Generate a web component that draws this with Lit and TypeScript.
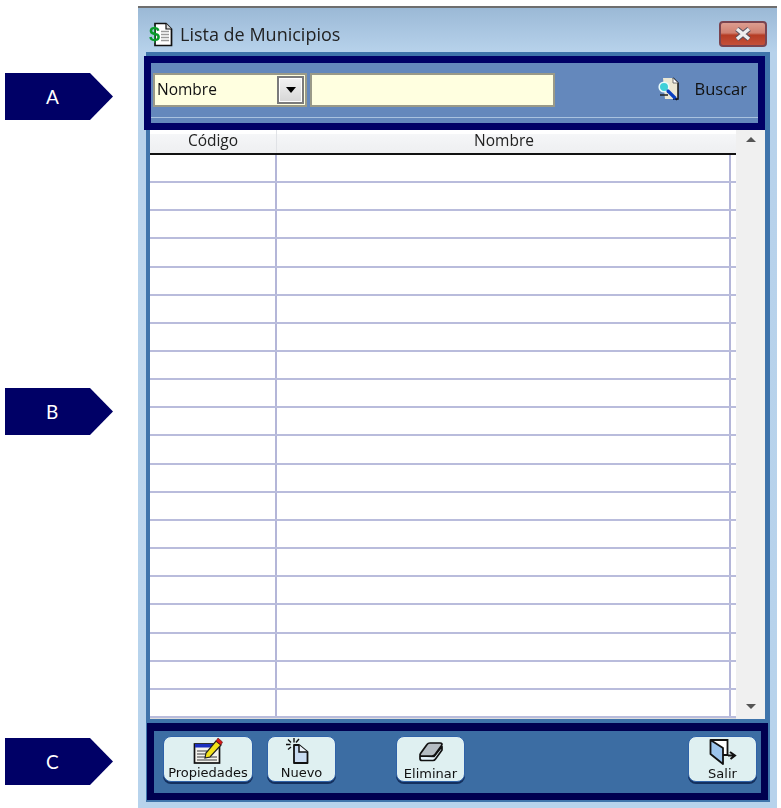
import { LitElement, html, css, svg } from "lit";
import { customElement } from "lit/decorators.js";

const docIcon = svg`<svg width="26" height="26" viewBox="0 0 26 26">
<path d="M6 2.500H17L22.500 8V24.500H6Z" fill="#fff" stroke="#111" stroke-width="1.700"/>
<path d="M17 2.500V8H22.500" fill="#ddd" stroke="#111" stroke-width="1.200"/>
<path d="M12 10.500H20M12 13.500H20M12 16.500H20M12 19.500H20" stroke="#9a9a9a" stroke-width="1.300"/>
<text x="0" y="20" font-family="Liberation Sans" font-weight="700" font-size="20" fill="#0a9a2a">$</text></svg>`;

const searchIcon = svg`<svg width="24" height="26" viewBox="0 0 24 26">
<path d="M6 2H16L21 7V23H8Z" fill="#ece8d4"/>
<path d="M16 2L21 7V23H16" fill="none" stroke="#111" stroke-width="1.500"/>
<path d="M16 2V7H21" fill="#fff" stroke="#555" stroke-width=".8"/>
<path d="M3 19H11" stroke="#222" stroke-width="1.500"/>
<circle cx="7" cy="11" r="4.800" fill="#3fd0d8" stroke="#e8fafa" stroke-width="1.600"/>
<path d="M11 15L18 22" stroke="#0a3fc0" stroke-width="3.200" stroke-linecap="round"/>
<path d="M18.500 22.500L20 24" stroke="#111" stroke-width="1.500"/></svg>`;

const propsIcon = svg`<svg width="32" height="28" viewBox="0 0 32 28">
<rect x="2.500" y="7" width="25" height="19" fill="#f4f4ee" stroke="#111" stroke-width="1.700"/>
<rect x="3" y="7" width="24" height="3.500" fill="#1a2fc0"/>
<path d="M5 14H15M5 17H14M5 20H25M5 23H25" stroke="#777" stroke-width="1.300"/>
<path d="M14 16L24 4L29 8L18 20L13 21Z" fill="#f2e21a" stroke="#222" stroke-width="1.200"/>
<path d="M24 4L26 1L30.500 5L29 8Z" fill="#d81818" stroke="#511" stroke-width=".6"/></svg>`;

const newIcon = svg`<svg width="34" height="28" viewBox="0 0 34 28">
<path d="M9 8H14L22.500 15V26H9Z" fill="#c9dcf2" stroke="#111" stroke-width="1.800" stroke-linejoin="round"/>
<path d="M14 8V15H22.500" fill="#eef4fb" stroke="#111" stroke-width="1.500"/>
<path d="M9 1V5.500M1 7.500H5.500M3 2.500L6 5.500M14 2L11 5.500M3 12.500L6 10" stroke="#111" stroke-width="1.400" fill="none"/></svg>`;

const eraseIcon = svg`<svg width="26" height="22" viewBox="0 0 26 22">
<path d="M2 15V17.500Q2 19.500 4 19.500H15Q16.500 19.500 17.500 18L24 9V5.500L16 15.500Z" fill="#e4f2fa" stroke="#111" stroke-width="1.700" stroke-linejoin="round"/>
<path d="M9 3.500Q10 2 12 2H22Q25 2 23.500 4.500L17 13.500Q16 15 14 15H4Q1 15 2.500 12.500Z" fill="#b4bcc2" stroke="#111" stroke-width="1.700"/></svg>`;

const exitIcon = svg`<svg width="30" height="28" viewBox="0 0 30 28">
<path d="M2.500 3H19.500V18H15" fill="#fff" stroke="#111" stroke-width="1.800"/>
<path d="M2.500 3L15 11V27L2.500 17Z" fill="#9cc4ec" stroke="#111" stroke-width="1.800" stroke-linejoin="round"/>
<path d="M22 15L27 18.500L22.500 22M27 18.500H20" stroke="#111" stroke-width="2" fill="none"/></svg>`;

@customElement("app-root")
export class AppRoot extends LitElement {
  static styles = css`
    :host { display: block; width: 781px; height: 808px; background: #fff; font-family: "Open Sans", sans-serif; overflow: hidden; }
    .page { display: flex; height: 808px; }
    .notes { width: 138px; flex: none; display: flex; flex-direction: column; padding-top: 73px; box-sizing: border-box; }
    .note { width: 108px; height: 47px; margin-left: 5px; background: #000066; color: #fff; display: flex; align-items: center; box-sizing: border-box; padding-left: 41px;
      clip-path: polygon(0 0, 85px 0, 108px 50%, 85px 100%, 0 100%); font: 19px Lato, sans-serif; }
    .note.b { margin-top: 268px; }
    .note.c { margin-top: 303px; }

    .window { width: 639px; height: 802px; margin-top: 6px; border-top: 2px solid #6e6e6e; box-sizing: border-box; background: linear-gradient(#9bb9d6 0, #b7d2eb 44px, #b7d3ec 100%); filter: blur(.35px); }
    .title { height: 44px; display: flex; align-items: center; padding: 8px 10px 0 11px; gap: 5px; box-sizing: border-box; font-size: 18px; color: #222; }
    .title-text { flex: 1; }
    .close { width: 48px; height: 26px; box-sizing: border-box; border: 2px solid #7a4450; border-radius: 4px; background: linear-gradient(#dd9d90, #d08070 45%, #b53c24 55%, #c4503a); display: flex; align-items: center; justify-content: center; }

    .panel { height: 750px; margin: 0 7px 0 8px; padding-top: 4px; box-sizing: border-box; background: #3f74ab; display: flex; flex-direction: column; }

    .search { height: 74px; margin: 0 5px 0 -2px; border: 7px solid #000066; box-sizing: border-box; background: #6488bc; }
    .search-row { height: 55px; border-bottom: 1px solid #a9c2df; padding: 10px 11px 0 2px; box-sizing: border-box; display: flex; align-items: flex-start; gap: 3px; font-size: 15.500px; color: #111; }
    .combo { width: 154px; height: 34px; box-sizing: border-box; border: 2px solid #9a9a88; background: #ffffe0; display: flex; align-items: center; justify-content: space-between; padding: 0 1px 0 2px; }
    .combo span { margin-top: -2px; }
    .arrow-btn { width: 27px; height: 28px; box-sizing: border-box; border: 2px solid #7b7b7b; outline: 1px solid #fff; outline-offset: -3px; background: linear-gradient(#f2f2f2, #d6d6d6); display: flex; align-items: center; justify-content: center; }
    .tri { width: 0; height: 0; border: 5px solid transparent; border-top: 6px solid #000; border-bottom: 0; }
    .field { width: 245px; height: 34px; box-sizing: border-box; border: 2px solid #9a9a88; background: #ffffe0; }
    .find { margin-left: auto; height: 34px; display: flex; align-items: center; gap: 14px; font-size: 16.500px; }
    .find svg { margin-top: -3px; margin-left: -2px; }
    .find span { margin-top: -3px; }

    .table { height: 589px; margin: 0 5px 0 4px; background: #fff; display: flex; }
    .grid { flex: 1; display: flex; flex-direction: column; }
    .head { height: 25px; flex: none; border-bottom: 2px solid #111; box-sizing: border-box; background: linear-gradient(#fff 4px, #f5f6f8 4px, #eeeff1); display: grid; grid-template-columns: 127px 1fr 5px; font-size: 15.500px; color: #222; text-align: center; line-height: 20px; }
    .head div:first-child { border-right: 1px solid #e0e2e6; }
    .rows { height: 564px; box-sizing: border-box; display: grid; grid-template-rows: repeat(20, 1fr); border-bottom: 1px solid #ddd; }
    .row { display: grid; grid-template-columns: 127px 1fr 5px; border-bottom: 2px solid #b9bcdc; box-sizing: border-box; }
    .row div { border-right: 2px solid #b4b6d8; }
    .row div:last-child { border-right: 0; }
    .scroll { width: 29px; background: #f0f0f0; display: flex; flex-direction: column; justify-content: space-between; align-items: center; padding: 7px 0 10px; box-sizing: border-box; }
    .up, .down { width: 0; height: 0; border: 5px solid transparent; }
    .up { border-bottom: 5px solid #555; border-top: 0; }
    .down { border-top: 5px solid #555; border-bottom: 0; }

    .actions { height: 77px; margin: 4px 2px 0 1px; border: 7px solid #000050; border-top-width: 8px; box-sizing: border-box; background: #3c6da3; padding: 5px 4px 0 9px; display: flex; align-items: flex-start; }
    .btn { width: 69px; height: 46px; box-sizing: border-box; border: 1px solid #2f62a8; border-radius: 8px; background: #dff0f1; box-shadow: 0 2px 0 #14305e; display: flex; flex-direction: column; align-items: center; font: 13px "DejaVu Sans", sans-serif; color: #111; }
    .btn svg { flex: none; }
    .btn span { line-height: 15px; }
    .wide { width: 90px; margin-right: 14px; }
    .erase { margin-left: 60px; padding-top: 4px; }
    .erase svg { margin-bottom: 3px; }
    .exit { margin-left: auto; }
    .exit span { margin-top: 1px; }
  `;

  render() {
    const rows = Array.from({ length: 20 });
    return html`<div class="page">
      <div class="notes">
        <div class="note">A</div>
        <div class="note b">B</div>
        <div class="note c">C</div>
      </div>
      <div class="window">
        <div class="title">
          ${docIcon}
          <span class="title-text">Lista de Municipios</span>
          <div class="close"><svg width="22" height="16" viewBox="0 0 22 16"><path d="M5 3L17 13M17 3L5 13" stroke="#55505e" stroke-width="5.500"/><path d="M5 3L17 13M17 3L5 13" stroke="#eeeeee" stroke-width="3.500"/></svg></div>
        </div>
        <div class="panel">
          <div class="search">
            <div class="search-row">
              <div class="combo"><span>Nombre</span><div class="arrow-btn"><div class="tri"></div></div></div>
              <div class="field"></div>
              <div class="find">${searchIcon}<span>Buscar</span></div>
            </div>
          </div>
          <div class="table">
            <div class="grid">
              <div class="head"><div>Código</div><div>Nombre</div><div></div></div>
              <div class="rows">${rows.map(() => html`<div class="row"><div></div><div></div><div></div></div>`)}</div>
            </div>
            <div class="scroll"><div class="up"></div><div class="down"></div></div>
          </div>
          <div class="actions">
            <div class="btn wide">${propsIcon}<span>Propiedades</span></div>
            <div class="btn">${newIcon}<span>Nuevo</span></div>
            <div class="btn erase">${eraseIcon}<span>Eliminar</span></div>
            <div class="btn exit">${exitIcon}<span>Salir</span></div>
          </div>
        </div>
      </div>
    </div>`;
  }
}
